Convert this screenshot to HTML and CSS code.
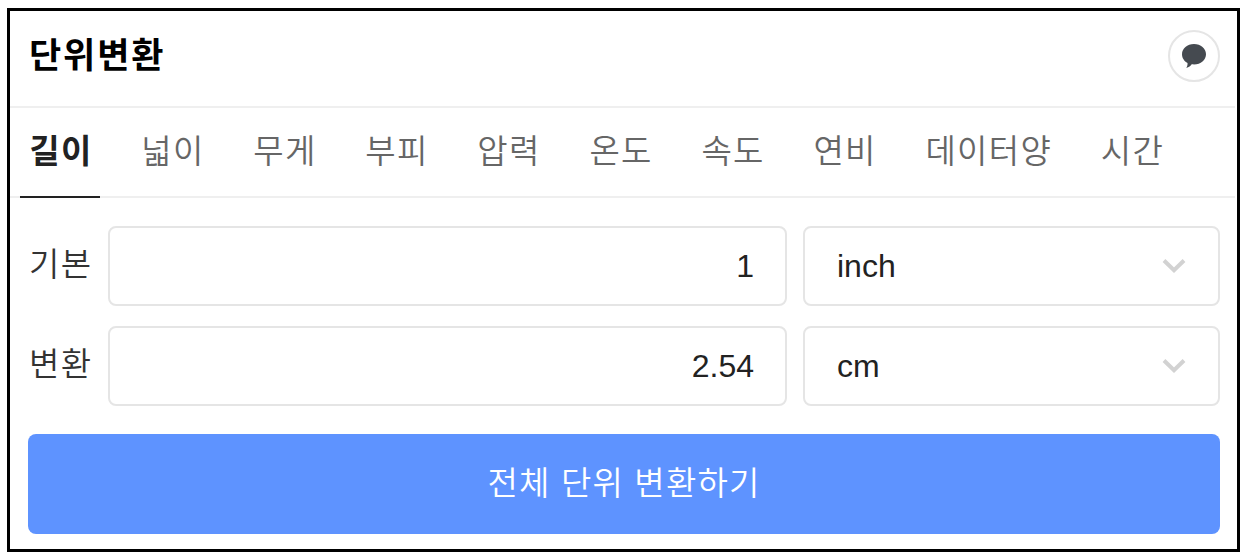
FILE: index.html
```html
<!DOCTYPE html>
<html lang="ko">
<head>
  <meta charset="UTF-8">
  <meta name="viewport" content="width=device-width, initial-scale=1.0">
  <title>단위변환</title>
  <link rel="stylesheet" href="styles.css">
</head>
<body>
  <div class="converter">
    <header class="header">
      <h1 class="title">단위변환</h1>
      <button class="talk" type="button" aria-label="의견 보내기">
        <svg width="26" height="26" viewBox="0 0 26 26">
          <path d="M13 1C6.200 1 1 5.500 1 11.200c0 3.700 2.200 7 5.500 8.700.2 1.700-.2 3.200-1.200 5 2.600-.6 4.200-1.700 5.400-3.600.8.100 1.500.1 2.300.1 6.800 0 12-4.500 12-10.200S19.800 1 13 1z" fill="#454a50"/>
        </svg>
      </button>
    </header>

    <!-- 단위 종류 -->
    <nav class="tabs">
      <a class="tab active">길이</a>
      <a class="tab">넓이</a>
      <a class="tab">무게</a>
      <a class="tab">부피</a>
      <a class="tab">압력</a>
      <a class="tab">온도</a>
      <a class="tab">속도</a>
      <a class="tab">연비</a>
      <a class="tab">데이터양</a>
      <a class="tab">시간</a>
    </nav>

    <!-- 입력 -->
    <div class="form">
      <div class="row">
        <label class="label" for="base">기본</label>
        <input class="value" id="base" type="text" value="1">
        <div class="unit">
          <span>inch</span>
          <svg class="arrow" width="24" height="16" viewBox="0 0 24 16">
            <path d="M2 2.500L12 12.200L22 2.500" fill="none" stroke="#d2d2d2" stroke-width="4"/>
          </svg>
        </div>
      </div>
      <div class="row">
        <label class="label" for="result">변환</label>
        <input class="value" id="result" type="text" value="2.54">
        <div class="unit">
          <span>cm</span>
          <svg class="arrow" width="24" height="16" viewBox="0 0 24 16">
            <path d="M2 2.500L12 12.200L22 2.500" fill="none" stroke="#d2d2d2" stroke-width="4"/>
          </svg>
        </div>
      </div>
      <button class="submit" type="button">전체 단위 변환하기</button>
    </div>
  </div>
</body>
</html>
```
FILE: styles.css
```css
* {
  box-sizing: border-box;
}

body {
  margin: 0;
  padding: 8px 7px;
  background-color: #fff;
  font-family: "Liberation Sans", "Noto Sans CJK KR", sans-serif;
  font-size: 32px;
}

.converter {
  width: 1233px;
  height: 544px;
  border: 3px solid #000;
}

/* 상단 */
.header {
  display: flex;
  justify-content: space-between;
  align-items: center;
  width: 1225px;
  height: 97px;
  padding: 0 15px 6px 19px;
  border-bottom: 2px solid #efefef;
}

.title {
  margin: 0;
  font-size: 35px;
  font-weight: bold;
  line-height: 48px;
  letter-spacing: 1.900px;
  color: #000;
}

.talk {
  display: flex;
  justify-content: center;
  align-items: center;
  width: 52px;
  height: 52px;
  margin-top: 1px;
  padding: 0;
  border: 2px solid #e5e5e5;
  border-radius: 50%;
  background-color: #fff;
}

/* 탭 */
.tabs {
  display: flex;
  gap: 32px;
  width: 1225px;
  height: 90px;
  padding-left: 10px;
  border-bottom: 2px solid #efefef;
}

.tab {
  height: 90px;
  padding: 0 7.400px 0 9.300px;
  font-size: 33px;
  line-height: 88px;
  letter-spacing: 1.300px;
  font-weight: 350;
  color: #666;
  white-space: nowrap;
}

.tab.active {
  border-bottom: 2px solid #222;
  font-weight: bold;
  color: #222;
}

/* 입력 영역 */
.form {
  padding: 28px 17px 0 18px;
}

.row {
  display: flex;
  height: 80px;
  margin-bottom: 20px;
}

.label {
  width: 80px;
  padding-left: 1px;
  font-size: 33px;
  line-height: 78px;
  letter-spacing: 1.500px;
  font-weight: 350;
  color: #333;
}

.value {
  width: 679px;
  margin-right: 16px;
  padding: 0 31px 0 20px;
  border: 2px solid #e5e5e5;
  border-radius: 8px;
  background-color: #fff;
  font: inherit;
  text-align: right;
  color: #222;
}

.unit {
  display: flex;
  flex: 1;
  justify-content: space-between;
  align-items: center;
  padding: 0 32px;
  border: 2px solid #e5e5e5;
  border-radius: 8px;
  color: #222;
}

.submit {
  display: block;
  width: 1192px;
  height: 100px;
  margin-top: 28px;
  padding: 0 0 6px;
  border: 0;
  border-radius: 8px;
  background-color: #5e93ff;
  font: inherit;
  font-size: 33px;
  font-weight: 350;
  letter-spacing: 1.200px;
  color: #fff;
}
```
